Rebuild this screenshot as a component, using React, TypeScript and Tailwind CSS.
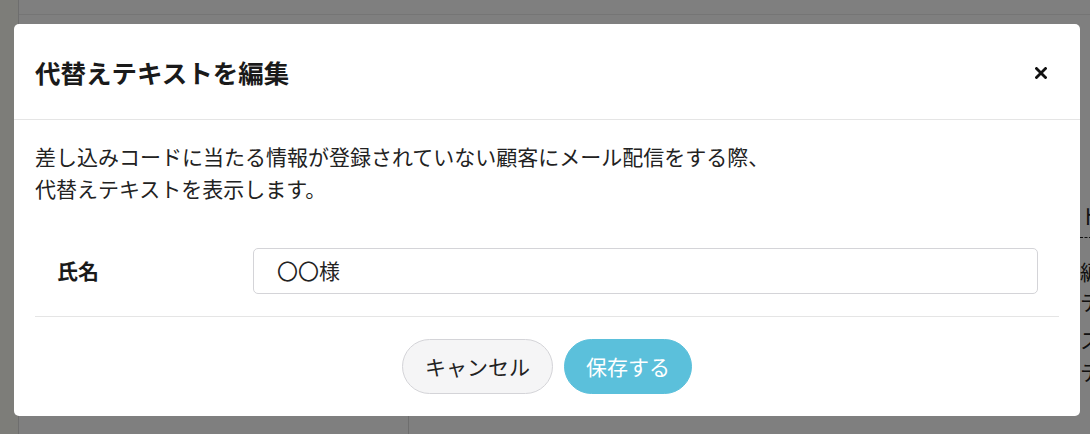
import React from "react";

const font = { fontFamily: '"Noto Sans CJK JP", "Noto Sans", sans-serif' };

export default function App() {
  return (
    <div className="relative h-[434px] w-[1090px] overflow-hidden bg-white text-[#222]" style={font}>
      {/* underlying page */}
      <div className="flex h-full">
        <div className="w-[19px] shrink-0 border-r border-[#dcdcdc] bg-[#fafaf3]" />
        <div className="flex flex-1 flex-col">
          <div className="h-[15px] shrink-0 border-b border-[#ebebeb]" />
          <div className="flex flex-1">
            <div className="mt-[60px] w-[390px] shrink-0 border-r border-[#dcdcdc]" />
            <div className="flex w-[671px] shrink-0 flex-col justify-end px-[20px] pb-[17px]">
              <div className="text-[16px] leading-[24px] whitespace-nowrap">テキストを入力してください。テキストを入力してください。</div>
            </div>
            <div className="flex-1 overflow-hidden pt-[184px] text-[21px] whitespace-nowrap">
              <div className="h-[32px] leading-[32px]">ト</div>
              <div className="mt-[6px] border-t border-dashed border-[#222]" />
              <div className="mt-[18px] h-[30px] leading-[30px]">編</div>
              <div className="h-[30px] leading-[30px]">テ</div>
              <div className="mt-[8px] h-[30px] leading-[30px]">ス</div>
              <div className="mt-[2px] h-[30px] leading-[30px]">テ</div>
            </div>
          </div>
        </div>
      </div>

      {/* overlay */}
      <div className="absolute inset-0 bg-black/50" />

      {/* modal */}
      <div className="absolute left-[14px] top-[24px] w-[1066px] rounded-[5px] bg-white">
        <div className="flex h-[96px] items-center justify-between border-b border-[#e5e5e5] px-[21px]">
          <h2 className="text-[25.5px] font-bold leading-none text-[#1a1a1a]">代替えテキストを編集</h2>
          <button className="mr-[11px] mt-[2px] flex h-[14px] w-[14px] items-center justify-center">
            <svg width="12" height="12" viewBox="0 0 12 12">
              <path d="M1.5 1.5 L10.5 10.5 M10.5 1.5 L1.5 10.5" stroke="#111" strokeWidth="2.8" strokeLinecap="square" />
            </svg>
          </button>
        </div>
        <div className="px-[21px] pt-[20px] pb-[22px]">
          <p className="text-[21px] leading-[32px] text-[#222]">
            差し込みコードに当たる情報が登録されていない顧客にメール配信をする際、
            <br />
            代替えテキストを表示します。
          </p>
          <div className="mt-[22px] flex items-center border-b border-[#e5e5e5] py-[22px] pl-[22px] pr-[21px]">
            <div className="w-[196px] shrink-0 text-[21px] font-bold text-[#1a1a1a]">氏名</div>
            <div className="flex h-[46px] flex-1 items-center rounded-[5px] border border-[#d4d4d8] px-[23px] text-[21px] text-[#222]">
              〇〇様
            </div>
          </div>
          <div className="mt-[22px] flex justify-center gap-[11px]">
            <button className="h-[55px] rounded-full border border-[#d4d4d8] bg-[#f5f5f6] px-[22px] text-[21px] text-[#222]">
              キャンセル
            </button>
            <button className="h-[55px] rounded-full border border-[#5bc0db] bg-[#5bc0db] px-[21px] text-[21px] text-white">
              保存する
            </button>
          </div>
        </div>
      </div>
    </div>
  );
}
